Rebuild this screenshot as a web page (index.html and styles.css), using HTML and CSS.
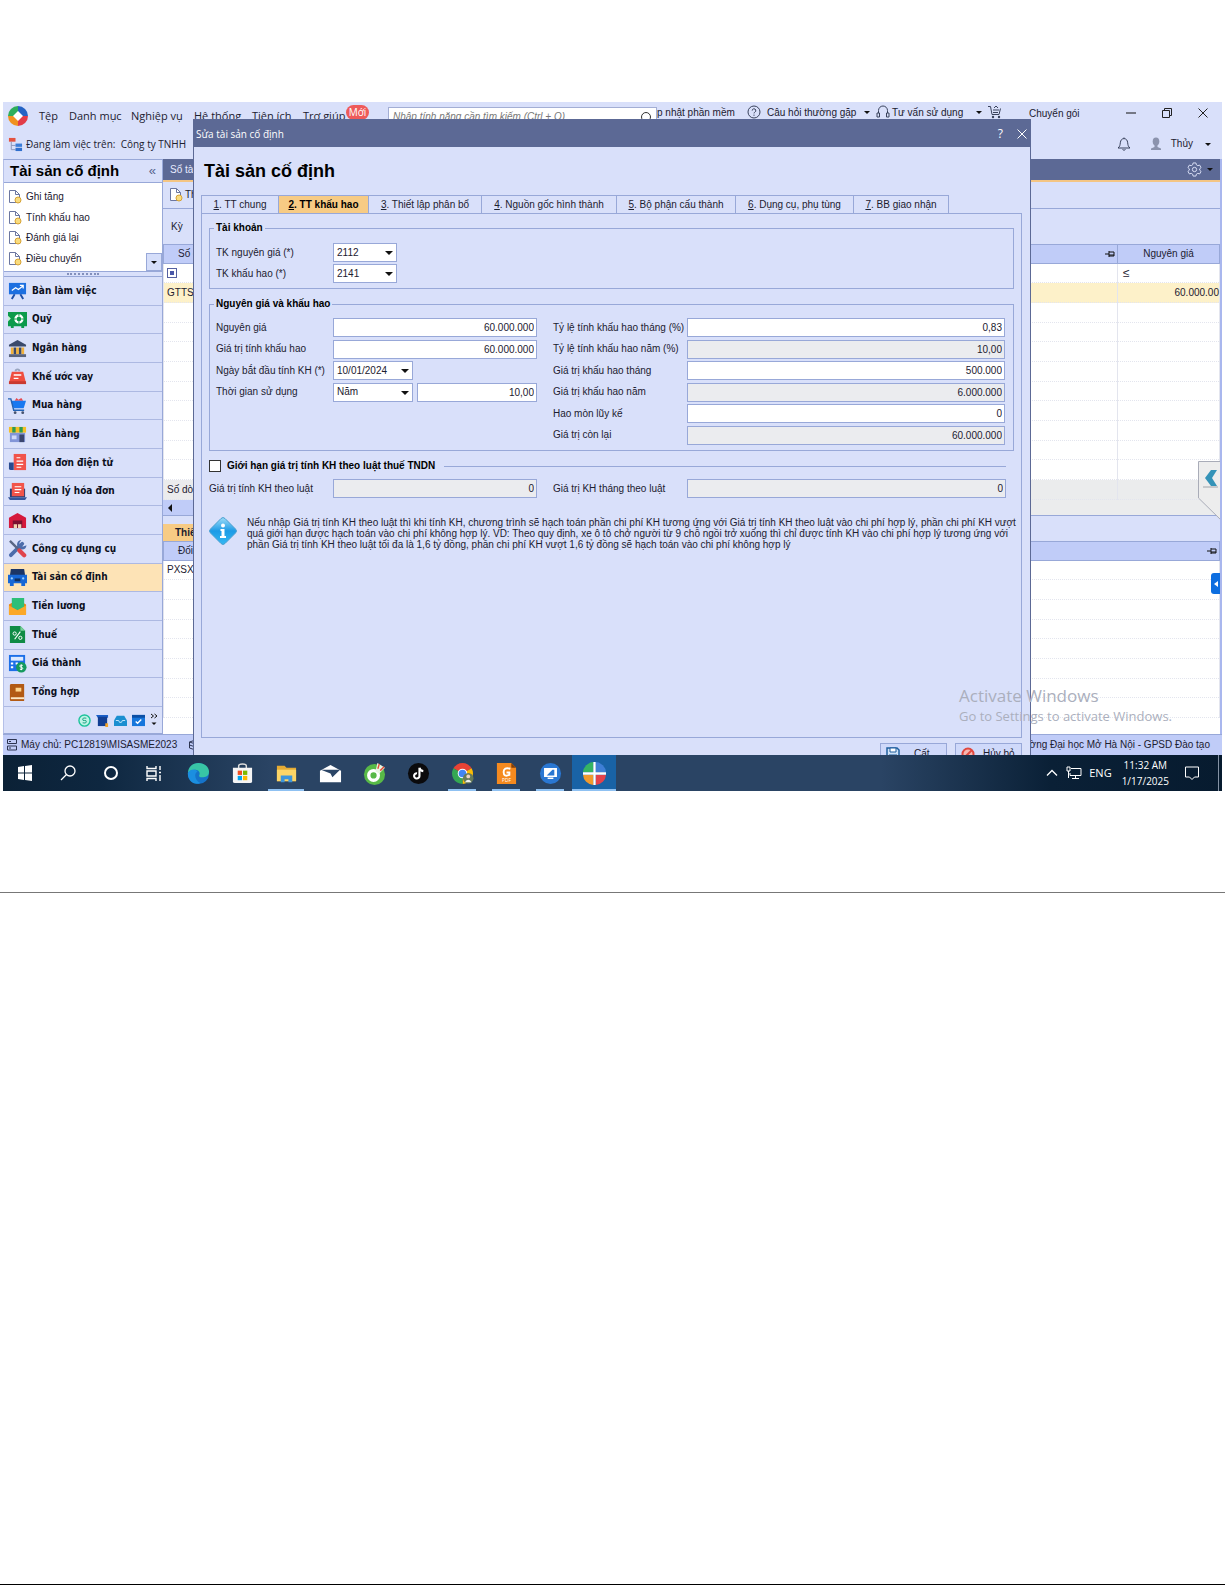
FILE: index.html
```html
<!DOCTYPE html>
<html lang="vi">
<head>
<meta charset="utf-8">
<meta name="viewport" content="width=device-width, initial-scale=1">
<title>Tài sản cố định</title>
<link rel="stylesheet" href="styles.css">
</head>
<body>
<section class="sheet">
<div class="screen">
<div class="desktop">

<header class="menubar">
  <svg class="logo" viewBox="0 0 20 20"><path d="M10 10H0A10 10 0 0 1 10 0z" fill="#2fae5c"/><path d="M10 10V0a10 10 0 0 1 10 10z" fill="#2563c4"/><path d="M10 10v10A10 10 0 0 1 0 10z" fill="#f0911f"/><path d="M10 10h10a10 10 0 0 1-10 10z" fill="#e23c48"/><path d="M10 5l5 5-5 5-5-5z" fill="#fff"/></svg>
  <nav class="menu">
    <a href="#">Tệp</a><a href="#">Danh mục</a><a href="#">Nghiệp vụ</a><a href="#">Hệ thống</a><a href="#">Tiện ích</a><a href="#">Trợ giúp</a>
  </nav>
  <span class="badge">Mới</span>
  <label class="search"><input type="text" aria-label="Tìm kiếm" placeholder="Nhập tính năng cần tìm kiếm (Ctrl + Q)">
    <svg viewBox="0 0 12 12"><circle cx="6" cy="6" r="4.500" fill="none" stroke="#333"/></svg></label>
  <div class="links">
    <a href="#">p nhật phần mềm</a>
    <svg class="i14" viewBox="0 0 14 14"><circle cx="7" cy="7" r="6" fill="none" stroke="#39425c"/><path d="M5.200 5.600a1.800 1.800 0 1 1 2.600 1.600c-.6.3-.8.600-.8 1.200M7 9.600v1.200" fill="none" stroke="#39425c"/></svg>
    <a href="#">Câu hỏi thường gặp</a><i class="caret"></i>
    <svg class="i14" viewBox="0 0 14 14"><path d="M2.500 8V5.500a4.500 4.500 0 0 1 9 0V8M1 8h2.500v4H1zM10.500 8H13v4h-2.500z" fill="none" stroke="#39425c"/></svg>
    <a href="#">Tư vấn sử dụng</a><i class="caret"></i>
    <svg class="i14" viewBox="0 0 14 14"><path d="M0 1.500h2.500l1.500 8h7l1.500-6M5 5h6M5 7.500h5M6 3l2-2 2 2" fill="none" stroke="#39425c"/><circle cx="5" cy="12" r="1.200" fill="#39425c"/><circle cx="11" cy="12" r="1.200" fill="#39425c"/></svg>
    <a href="#" class="plan">Chuyển gói</a>
  </div>
  <div class="winctl">
    <button aria-label="Thu nhỏ"><svg viewBox="0 0 10 10"><path d="M0 5h10" stroke="#111"/></svg></button>
    <button aria-label="Khôi phục"><svg viewBox="0 0 10 10"><path d="M.5 2.500h7v7h-7zM2.500 2.500v-2h7v7h-2" fill="none" stroke="#222"/></svg></button>
    <button aria-label="Đóng"><svg viewBox="0 0 10 10"><path d="M.5.5l9 9M9.500.5l-9 9" stroke="#222"/></svg></button>
  </div>
</header>

<div class="company">
  <svg viewBox="0 0 16 16"><path d="M1 1h7v4H1z" fill="#e4523f"/><path d="M3.500 5v8.500H8M3.500 9H8" fill="none" stroke="#8a94b8"/><path d="M8 7h7v3.500H8z" fill="#3b7dd8"/><path d="M8 11.500h7V15H8z" fill="#2f6fcd"/></svg>
  <span>Đang làm việc trên:&nbsp; Công ty TNHH</span>
  <div class="account">
    <svg class="bell" viewBox="0 0 14 16"><path d="M7 1.500v1M1 12c2-1.500 2-3 2.300-5.200C3.600 4 5 2.600 7 2.600S10.400 4 10.700 6.800C11 9 11 10.500 13 12zM5.500 13.500q1.500 1.500 3 0" fill="none" stroke="#39425c"/></svg>
    <svg class="user" viewBox="0 0 10 14"><ellipse cx="5" cy="4.500" rx="3.300" ry="4" fill="#8b93ad"/><path d="M3.500 8h3v2L10 11.500V13H0v-1.500L3.500 10z" fill="#8b93ad"/></svg>
    <span>Thủy</span><i class="caret"></i>
  </div>
</div>

<div class="main">
<aside class="sidebar">
  <div class="side-head"><h2>Tài sản cố định</h2><span>«</span></div>
  <div class="tasks">
    <a href="#"><svg viewBox="0 0 14 14"><use href="#doc"/></svg>Ghi tăng</a>
    <a href="#"><svg viewBox="0 0 14 14"><use href="#doc"/></svg>Tính khấu hao</a>
    <a href="#"><svg viewBox="0 0 14 14"><use href="#doc"/></svg>Đánh giá lại</a>
    <a href="#"><svg viewBox="0 0 14 14"><use href="#doc"/></svg>Điều chuyển</a>
    <button class="more" aria-label="Cuộn xuống"><i class="caret"></i></button>
  </div>
  <div class="splitter"><i></i></div>
  <nav class="modules">
    <a href="#"><svg viewBox="0 0 20 20"><path d="M1 2h18v12H1z" fill="#1d6fe0"/><path d="M7 14l-3 5M13 14l3 5" stroke="#1d4fa8" stroke-width="2"/><path d="M4 10l4-3 3 2 5-4M12.500 4.500H16V8" fill="none" stroke="#fff" stroke-width="1.300"/></svg>Bàn làm việc</a>
    <a href="#"><svg viewBox="0 0 20 20"><path d="M0 2h20v15H0zM3 17h3v2H3zM14 17h3v2h-3z" fill="#0c9a4b"/><circle cx="11.500" cy="9.500" r="3.700" fill="none" stroke="#fff" stroke-width="2.400"/><path d="M11.500 4v3M11.500 12v3M6 9.500h3M14 9.500h3" stroke="#0c9a4b"/><path d="M0 6l3 3-3 3z" fill="#c8f0d4"/></svg>Quỹ</a>
    <a href="#"><svg viewBox="0 0 20 20"><path d="M10 1l9 5v2H1V6z" fill="#3b4a6b"/><path d="M3 9h3v7H3zM8.500 9h3v7h-3zM14 9h3v7h-3z" fill="#f2b23a"/><path d="M6 9h2.500v7H6zM11.500 9H14v7h-2.500z" fill="#3b4a6b"/><path d="M1 16h18v3H1z" fill="#59637c"/></svg>Ngân hàng</a>
    <a href="#"><svg viewBox="0 0 20 20"><path d="M8 4.500a2 2 0 0 1 4 0" fill="none" stroke="#9aa6c0" stroke-width="2"/><path d="M4 5h12l3 12H1z" fill="#ef4e40"/><path d="M1 15h18v3H1z" fill="#c93a30"/><path d="M6 8.500h8M6 12h5" stroke="#fff" stroke-width="1.500"/></svg>Khế ước vay</a>
    <a href="#"><svg viewBox="0 0 20 20"><path d="M7 5l2-3 2 2 3-2 2 3z" fill="#e5484f"/><path d="M3 5h16l-2.500 8H6z" fill="#1878f0"/><path d="M0 3h3l3 12h11" fill="none" stroke="#2363b5" stroke-width="1.500"/><circle cx="7.500" cy="17.500" r="1.500" fill="#48536e"/><circle cx="15.500" cy="17.500" r="1.500" fill="#48536e"/></svg>Mua hàng</a>
    <a href="#"><svg viewBox="0 0 20 20"><path d="M2 8h16v10H2z" fill="#8295d8"/><path d="M12 10h5v8h-5z" fill="#3a4670"/><path d="M4 11h5v4H4z" fill="#cfd8fa"/><path d="M1 2h18v6H1z" fill="#f5bf25"/><path d="M4.500 2h3.500v6H4.500zM12 2h3.500v6H12z" fill="#2b9a55"/></svg>Bán hàng</a>
    <a href="#"><svg viewBox="0 0 20 20"><path d="M6 1h13v17H6z" fill="#f1544b"/><path d="M1 10h5v8H3q-2 0-2-2z" fill="#284a8f"/><path d="M9 5h4M9 8.500h7M9 12h7M9 15h5" stroke="#fff" stroke-width="1.200"/></svg>Hóa đơn điện tử</a>
    <a href="#"><svg viewBox="0 0 20 20"><path d="M2 7h16v9H2z" fill="#273f77"/><path d="M4 1h13v14H4z" fill="#f1544b"/><path d="M7 5h7M7 8h7M7 11h5" stroke="#fff" stroke-width="1.200"/><path d="M0 16h20l-2 3H2z" fill="#35559b"/></svg>Quản lý hóa đơn</a>
    <a href="#"><svg viewBox="0 0 20 20"><path d="M10 2l9 5v11H1V7z" fill="#d5193c"/><path d="M5 10h10v8H5z" fill="#7b1030"/><path d="M6 14h3.500v4H6zM10.500 14H14v4h-3.500z" fill="#f2d3b0"/></svg>Kho</a>
    <a href="#"><svg viewBox="0 0 20 20"><path d="M3 17L15 5" stroke="#4c6cab" stroke-width="4" stroke-linecap="round"/><path d="M14 1a5 5 0 1 0 5.500 5.500L16 8l-3.500-1L12 4z" fill="#4c6cab"/><path d="M2 2l9 9" stroke="#5a6684" stroke-width="2.500"/><path d="M12 12l5 5" stroke="#e0444c" stroke-width="4.500" stroke-linecap="round"/></svg>Công cụ dụng cụ</a>
    <a href="#" class="on"><svg viewBox="0 0 20 20"><path d="M3 1h14l1 7H2z" fill="#1c3566"/><path d="M0 7h20v9H0zM2 16h4v3H2zM14 16h4v3h-4z" fill="#1767d6"/><circle cx="4" cy="11" r="1.200" fill="#9cd1ff"/><circle cx="16" cy="11" r="1.200" fill="#9cd1ff"/><path d="M7 11h6v3H7z" fill="#12315f"/></svg>Tài sản cố định</a>
    <a href="#"><svg viewBox="0 0 20 20"><path d="M1 8l9-5 9 5v10H1z" fill="#e98613"/><path d="M4 1h13v10l-7 3-6-3z" fill="#2dbf79"/><path d="M1 9l9 5 9-5v10H1z" fill="#fba828"/></svg>Tiền lương</a>
    <a href="#"><svg viewBox="0 0 20 20"><path d="M2 1h11l5 5v13H2z" fill="#0f8b45"/><path d="M13 1l5 5h-5z" fill="#77cf99"/><path d="M7 15l6-8" stroke="#fff" stroke-width="1.200"/><circle cx="7" cy="9" r="1.700" fill="none" stroke="#fff"/><circle cx="13" cy="13.500" r="1.700" fill="none" stroke="#fff"/></svg>Thuế</a>
    <a href="#"><svg viewBox="0 0 20 20"><path d="M1 1h17v17H1z" fill="#1c6fe8"/><path d="M3 3h13v4H3z" fill="#dce9ff"/><path d="M3 10h2.500M8 10h2.500M3 14h2.500" stroke="#fff" stroke-width="2"/><circle cx="14" cy="14" r="5.500" fill="#159a5d"/><path d="M15.500 12q-3-1-3 .5t1.500 1.500 1.500 1.500-3 .5M14 11v6" fill="none" stroke="#fff"/></svg>Giá thành</a>
    <a href="#"><svg viewBox="0 0 20 20"><path d="M3 1h14v18H3q-1 0-1-2V3q0-2 1-2z" fill="#b25a14"/><path d="M3 15h14v2H3z" fill="#fbe7c5"/><path d="M8 5h6v4H8z" fill="#ffd58a"/></svg>Tổng hợp</a>
  </nav>
  <div class="shortcuts">
    <svg viewBox="0 0 14 14"><circle cx="7" cy="7" r="6" fill="#bff3e6" stroke="#1cc39a" stroke-width="1.500"/><path d="M9 4.500q-4-1-4 1T7 7t2 1.500-4 1" fill="none" stroke="#129c7b"/></svg>
    <svg viewBox="0 0 14 14"><path d="M0 1h13v3H2z" fill="#1b5fc8"/><path d="M2 3h10v10H2z" fill="#123f93"/><path d="M10 10h3v4h-3z" fill="#f5a52a"/></svg>
    <svg viewBox="0 0 14 14"><path d="M3 2h8l3 5v6H0V7z" fill="#1b8fd0"/><path d="M2 7h3l1 2h2l1-2h3" fill="none" stroke="#c7ecff"/></svg>
    <svg viewBox="0 0 14 14"><path d="M0 1h14v12H0z" fill="#1676dc"/><path d="M0 1h14v3H0z" fill="#0b4fa5"/><path d="M4 8l2 2 4-4" fill="none" stroke="#fff" stroke-width="1.500"/></svg>
    <svg class="chev" viewBox="0 0 8 14"><path d="M1 1l2.500 2L1 5M4.500 1L7 3 4.500 5" fill="none" stroke="#111"/><path d="M1.500 9.500h5L4 12z" fill="#111"/></svg>
  </div>
</aside>

<section class="work">
  <div class="tabbar"><span>Sổ tài sản</span>
    <div class="gear"><svg viewBox="0 0 16 16"><path d="M6.500 1h3l.5 2 1.500.9 2-.6L15 6l-1.500 1.300v1.400L15 10l-1.500 2.700-2-.6-1.500.9-.5 2h-3L6 13l-1.500-.9-2 .6L1 10l1.500-1.300V7.300L1 6l1.500-2.700 2 .6L6 3z" fill="none" stroke="#dfe4fa"/><circle cx="8" cy="8" r="2.300" fill="none" stroke="#dfe4fa"/></svg><i class="caret"></i></div>
  </div>
  <div class="toolbar"><svg viewBox="0 0 14 14"><use href="#doc"/></svg><span>Thêm</span></div>
  <div class="period">Kỳ</div>
  <table class="grid">
    <colgroup><col><col class="c-val"></colgroup>
    <thead><tr><th class="first"><div><span>Số chứng từ</span><svg class="pin" viewBox="0 0 10 8"><path d="M0 4h4M4 1v6M4 2h5v4H4M4 5h5" fill="none" stroke="#111"/></svg></div></th><th>Nguyên giá</th></tr></thead>
    <tbody>
      <tr class="filter"><td><i class="sq"></i></td><td>≤</td></tr>
      <tr class="sel"><td>GTTS01</td><td class="num">60.000.00</td></tr>
      <tr><td></td><td></td></tr><tr><td></td><td></td></tr><tr><td></td><td></td></tr>
      <tr><td></td><td></td></tr><tr><td></td><td></td></tr><tr><td></td><td></td></tr>
      <tr><td></td><td></td></tr><tr><td></td><td></td></tr><tr><td></td><td></td></tr>
    </tbody>
    <tfoot><tr><td>Số dòng</td><td></td></tr></tfoot>
  </table>
  <div class="hscroll"><div class="thumb"><i></i></div></div>
  <div class="subtabs"><button>Thiết lập</button></div>
  <table class="grid detail">
    <thead><tr><th class="first"><div><span>Đối tượng</span><svg class="pin" viewBox="0 0 10 8"><path d="M0 4h4M4 1v6M4 2h5v4H4M4 5h5" fill="none" stroke="#111"/></svg></div></th></tr></thead>
    <tbody><tr><td>PXSX</td></tr><tr><td></td></tr><tr><td></td></tr><tr><td></td></tr><tr><td></td></tr><tr><td></td></tr><tr><td></td></tr><tr><td></td></tr></tbody>
  </table>
  <div class="rest"></div>
  <svg class="flap" viewBox="0 0 24 60"><path d="M24 .5H.5V37L24 60z" fill="#ededed" stroke="#a9acb8"/><path d="M13 9h6l-5 8 5 8h-6L7 17z" fill="#3493b8"/><path d="M5 26h15" stroke="#a0a4aa"/></svg>
  <div class="handle"><i></i></div>
</section>
</div>

<footer class="status">
  <svg viewBox="0 0 10 12"><path d="M.5.5h9v4h-9zM.5 7h9v4h-9zM2 2.500h2M2 9h2" fill="none" stroke="#2d3552"/></svg>
  <span>Máy chủ: PC12819\MISASME2023</span>
  <svg class="db" viewBox="0 0 10 12"><path d="M.5 3q4.500-3 9 0v6q-4.500 3-9 0zM.5 3q4.500 3 9 0M.5 6q4.500 3 9 0" fill="none" stroke="#2d3552"/></svg>
  <span class="org">Trường Đại học Mở Hà Nội - GPSD Đào tạo</span>
</footer>

<div class="dialog" role="dialog" aria-labelledby="dlg">
  <div class="titlebar"><span>Sửa tài sản cố định</span>
    <button aria-label="Trợ giúp">?</button>
    <button aria-label="Đóng"><svg viewBox="0 0 10 10"><path d="M.5.5l9 9M9.500.5l-9 9" stroke="#fff"/></svg></button></div>
  <form class="content">
    <h1 id="dlg">Tài sản cố định</h1>
    <div class="tabs">
      <button type="button"><span><u>1</u>. TT chung</span></button><button type="button" class="on"><span><u>2</u>. TT khấu hao</span></button><button type="button"><span><u>3</u>. Thiết lập phân bổ</span></button><button type="button"><span><u>4</u>. Nguồn gốc hình thành</span></button><button type="button"><span><u>5</u>. Bộ phận cấu thành</span></button><button type="button"><span><u>6</u>. Dụng cụ, phụ tùng</span></button><button type="button"><span><u>7</u>. BB giao nhận</span></button>
    </div>
    <div class="panel">
      <fieldset class="box accounts"><legend>Tài khoản</legend>
        <div class="col">
          <div class="row"><label for="a1">TK nguyên giá (*)</label><span class="pick small"><select id="a1"><option>2112</option></select></span></div>
          <div class="row"><label for="a2">TK khấu hao (*)</label><span class="pick small"><select id="a2"><option>2141</option></select></span></div>
        </div>
      </fieldset>
      <fieldset class="box cost"><legend>Nguyên giá và khấu hao</legend>
        <div class="cols">
          <div class="col left">
            <div class="row"><label for="b1">Nguyên giá</label><input id="b1" type="text" value="60.000.000"></div>
            <div class="row"><label for="b2">Giá trị tính khấu hao</label><input id="b2" type="text" value="60.000.000"></div>
            <div class="row"><label for="b3">Ngày bắt đầu tính KH (*)</label><span class="pick"><select id="b3"><option>10/01/2024</option></select></span></div>
            <div class="row"><label for="b4">Thời gian sử dụng</label><span class="pick"><select id="b4"><option>Năm</option></select></span><input type="text" aria-label="Số năm" value="10,00"></div>
          </div>
          <div class="col right">
            <div class="row"><label for="c1">Tỷ lệ tính khấu hao tháng (%)</label><input id="c1" type="text" value="0,83"></div>
            <div class="row"><label for="c2">Tỷ lệ tính khấu hao năm (%)</label><input id="c2" type="text" value="10,00" readonly></div>
            <div class="row"><label for="c3">Giá trị khấu hao tháng</label><input id="c3" type="text" value="500.000"></div>
            <div class="row"><label for="c4">Giá trị khấu hao năm</label><input id="c4" type="text" value="6.000.000" readonly></div>
            <div class="row"><label for="c5">Hao mòn lũy kế</label><input id="c5" type="text" value="0"></div>
            <div class="row"><label for="c6">Giá trị còn lại</label><input id="c6" type="text" value="60.000.000" readonly></div>
          </div>
        </div>
      </fieldset>
      <div class="limit"><input type="checkbox" id="lim"><label for="lim">Giới hạn giá trị tính KH theo luật thuế TNDN</label><i></i></div>
      <div class="cols law">
        <div class="col left"><div class="row"><label for="d1">Giá trị tính KH theo luật</label><input id="d1" type="text" value="0" readonly></div></div>
        <div class="col right"><div class="row"><label for="d2">Giá trị KH tháng theo luật</label><input id="d2" type="text" value="0" readonly></div></div>
      </div>
      <div class="note">
        <svg viewBox="0 0 28 28"><defs><linearGradient id="g" x1="0" y1="0" x2="0" y2="1"><stop offset="0" stop-color="#9ddcf8"/><stop offset=".5" stop-color="#1d9be6"/><stop offset="1" stop-color="#35b8f2"/></linearGradient></defs><path d="M12 1.500q2-2 4 0L26.500 12q2 2 0 4L16 26.500q-2 2-4 0L1.500 16q-2-2 0-4z" fill="url(#g)" stroke="#4a9fd0"/><circle cx="14" cy="8.500" r="2" fill="#fff"/><path d="M11.500 12h4v7h1.500v2h-6v-2h1.500v-5h-1z" fill="#fff"/></svg>
        <p>Nếu nhập Giá trị tính KH theo luật thì khi tính KH, chương trình sẽ hạch toán phần chi phí KH tương ứng với Giá trị tính KH theo luật vào chi phí hợp lý, phần chi phí KH vượt<br>quá giới hạn được hạch toán vào chi phí không hợp lý. VD: Theo quy định, xe ô tô chở người từ 9 chỗ ngồi trở xuống thì chỉ được tính KH vào chi phí hợp lý tương ứng với<br>phần Giá trị tính KH theo luật tối đa là 1,6 tỷ đồng, phần chi phí KH vượt 1,6 tỷ đồng sẽ hạch toán vào chi phí không hợp lý</p>
      </div>
    </div>
    <div class="actions">
      <button type="button"><svg viewBox="0 0 14 14"><path d="M1 1h10l2 2v10H1z" fill="#cfe2f7" stroke="#1f5f9e" stroke-width="1.500"/><path d="M4 1h6v4H4zM3 8h8v5H3z" fill="#fff" stroke="#1f5f9e"/></svg><span>Cất</span></button>
      <button type="button"><svg viewBox="0 0 14 14"><circle cx="7" cy="7" r="5.500" fill="#f7b7b0" stroke="#e0483f" stroke-width="2"/><path d="M3 11l8-8" stroke="#e0483f" stroke-width="2"/></svg><span>Hủy bỏ</span></button>
    </div>
  </form>
</div>

<div class="watermark"><b>Activate Windows</b><span>Go to Settings to activate Windows.</span></div>
</div>

<div class="taskbar">
  <div class="sys">
    <button aria-label="Start"><svg viewBox="0 0 20 20"><path d="M3 4l6-1v6.500H3zM10 3l7-1v7.500h-7zM3 10.500h6V17l-6-1zM10 10.500h7V18l-7-1z" fill="#fff"/></svg></button>
    <button aria-label="Search"><svg viewBox="0 0 20 20"><circle cx="12" cy="8" r="5" fill="none" stroke="#fff" stroke-width="1.300"/><path d="M8.500 11.500L3 17" stroke="#fff" stroke-width="1.300"/></svg></button>
    <button aria-label="Cortana"><svg viewBox="0 0 20 20"><circle cx="10" cy="10" r="6" fill="none" stroke="#fff" stroke-width="2"/></svg></button>
    <button aria-label="Task view"><svg viewBox="0 0 20 20"><path d="M3 3v2.500h9V3M3 8h9v5H3zM3 18v-2.500h9V18M16 3v4M16 12v6M15 9.500h2" fill="none" stroke="#fff" stroke-width="1.400"/></svg></button>
  </div>
  <div class="apps">
    <button aria-label="Edge"><svg viewBox="0 0 24 24"><circle cx="12" cy="12" r="11" fill="#1573c9"/><path d="M1 12C1 5 6 1 12 1s11 4 11 9-4 6-7 6-4-1-3-3-1-5-4-5-7 1-8 4z" fill="#38c5a5"/><path d="M1 11c3-4 8-4 10-1-4 2-3 9 3 12C6 25 0 18 1 11z" fill="#1b8fe0"/></svg></button>
    <button aria-label="Store"><svg viewBox="0 0 24 24"><path d="M8 7V4q0-2 4-2t4 2v3" fill="none" stroke="#ddd" stroke-width="1.500"/><path d="M2 6h20v14q0 2-2 2H4q-2 0-2-2z" fill="#f5f5f5"/><path d="M7 9h4.500v4.500H7z" fill="#f25022"/><path d="M12.500 9H17v4.500h-4.500z" fill="#7fba00"/><path d="M7 14.500h4.500V19H7z" fill="#00a4ef"/><path d="M12.500 14.500H17V19h-4.500z" fill="#ffb900"/></svg></button>
    <button aria-label="File Explorer" class="open wide"><svg viewBox="0 0 24 24"><path d="M2 4h8l2 2h10v14H2z" fill="#e5ab34"/><path d="M2 8h20v12H2z" fill="#fcd566"/><path d="M6 14h12v7h-4v-3h-4v3H6z" fill="#3c95db"/></svg></button>
    <button aria-label="Mail"><svg viewBox="0 0 24 24"><path d="M1 9l11-6 11 6v12H1z" fill="#fff"/><path d="M2 8h20l-8 8-2-4z" fill="#2b4566"/></svg></button>
    <button aria-label="Cốc Cốc"><svg viewBox="0 0 24 24"><circle cx="12" cy="13" r="11" fill="#58b947"/><circle cx="11" cy="14" r="5" fill="none" stroke="#fff" stroke-width="3.500"/><path d="M13 10l2-9 8 5-6 6z" fill="#e8f6e0"/><path d="M15.500 7l1.500-5M18 9l4-4" stroke="#e24c3a" stroke-width="1.500"/></svg></button>
    <button aria-label="TikTok"><svg viewBox="0 0 24 24"><circle cx="12" cy="12" r="11" fill="#0a0a0c"/><path d="M13 6v8.500a2.800 2.800 0 1 1-2.500-2.800M13 6q.5 3 4 3.500" fill="none" stroke="#fff" stroke-width="2.200"/></svg></button>
    <button aria-label="Chrome" class="open"><svg viewBox="0 0 24 24"><path d="M12 12L2.500 6.500a11 11 0 0 1 19 0z" fill="#e94335"/><path d="M12 12l9.500-5.500A11 11 0 0 1 12 23z" fill="#fbbc05"/><path d="M12 12v11A11 11 0 0 1 2.500 6.500z" fill="#34a853"/><circle cx="12" cy="12" r="5" fill="#fff"/><circle cx="12" cy="12" r="4" fill="#4285f4"/><circle cx="18" cy="17" r="5.500" fill="#667b58"/><circle cx="18" cy="15" r="2" fill="#ecd3c0"/><path d="M14.500 21q3.500-5 7 0z" fill="#f0f0f0"/></svg></button>
    <button aria-label="PDF" class="open"><svg viewBox="0 0 24 24"><path d="M2 1h15l5 5v17H2z" fill="#f58a1f"/><path d="M17 1l5 5h-5z" fill="#803f0a"/><path d="M16 7q-7-2-7 3.500t6 3V11h-3" fill="none" stroke="#fff" stroke-width="2"/><text x="12" y="21" font-size="5" text-anchor="middle" fill="#fff">PDF</text></svg></button>
    <button aria-label="UltraViewer" class="open"><svg viewBox="0 0 24 24"><circle cx="12" cy="12" r="11" fill="#2a77d2"/><path d="M6 7h12v8H6zM9 17h6" fill="#fff" stroke="#fff" stroke-width="1.500"/><path d="M8 14l6-6h2v6z" fill="#2a77d2"/></svg></button>
    <button aria-label="MISA" class="open current"><svg viewBox="0 0 20 20"><path d="M9 9H0A9.500 9.500 0 0 1 9 0z" fill="#35b463"/><path d="M11 9V0a9.500 9.500 0 0 1 9 9z" fill="#3f7fd6"/><path d="M9 11v9a9.500 9.500 0 0 1-9-9z" fill="#f09a2d"/><path d="M11 11h9a9.500 9.500 0 0 1-9 9z" fill="#e4424b"/><path d="M9 0h2v9h9v2h-9v9H9v-9H0V9h9z" fill="#fff"/></svg></button>
  </div>
  <div class="tray">
    <svg class="up" viewBox="0 0 12 12"><path d="M1 8.500l5-5 5 5" fill="none" stroke="#fff" stroke-width="1.300"/></svg>
    <svg class="net" viewBox="0 0 16 14"><path d="M5 2.500h10v7H4V7M9.500 9.500V12M6 12.500h7M1 1h3v4H1zM2.500 5v7" fill="none" stroke="#fff"/></svg>
    <span>ENG</span>
    <time>11:32 AM<br>1/17/2025</time>
    <svg class="msg" viewBox="0 0 14 14"><path d="M.5 1h13v10H9.500L7 13.500 4.500 11h-4z" fill="none" stroke="#fff"/></svg>
  </div>
</div>
</div>
</section>
<hr class="rule">
<section class="sheet blank"></section>

<svg class="defs" width="0" height="0"><symbol id="doc" viewBox="0 0 14 14"><path d="M1.500.5h6l4 4v8h-10z" fill="#fff" stroke="#6b76a0"/><path d="M7.500.5v4h4" fill="none" stroke="#6b76a0"/><circle cx="10" cy="10" r="3" fill="#f9dc7e" stroke="#d6a235"/></symbol></svg>
</body>
</html>
```
FILE: styles.css
```css
:root {
  --bg: #d9e0fa;
  --bar: #5c6995;
  --head: #c0ccf8;
  --line: #98a8d8;
  --ui: "Open Sans", "Noto Sans", sans-serif;
  --form: "Liberation Sans", Arial, sans-serif;
}
* { box-sizing: border-box; }
body { margin: 0; background: #fff; font: 10px/12px var(--form); color: #1c2030; }
a { color: inherit; text-decoration: none; }
button { border: 0; padding: 0; background: none; font: inherit; color: inherit; }
svg { display: block; flex: none; }
.defs { position: absolute; }
.sheet { padding: 102px 3px 101px; }
.blank { padding: 0; min-height: 692px; border-bottom: 1px solid #000; }
.rule { margin: 0; border: 0; height: 1px; background: #777; }

.desktop { position: relative; display: flex; flex-direction: column; min-height: 653px; overflow: hidden; background: var(--bg); }
.caret { flex: none; width: 0; height: 0; border: 3px solid transparent; border-top: 3px solid #111; border-bottom: 0; }

.menubar { display: flex; height: 30px; padding-left: 5px; font: 10px/14px var(--ui); }
.logo { width: 20px; height: 20px; margin: 4px 11px 0 0; }
.menu { display: grid; grid-template-columns: 30px 62px 63px 58px 51px 43px; padding-top: 7px; font-size: 11px; white-space: nowrap; }
.badge { width: 23px; height: 15px; margin-top: 3px; border-radius: 8px; background: #ee5a5a; color: #fff; text-align: center; }
.search { display: flex; align-items: center; justify-content: space-between; width: 269px; height: 20px; margin: 5px 0 0 19px; padding: 0 4px; border: 1px solid #a3aed4; background: #fff; }
.search input { flex: 1; min-width: 0; border: 0; padding: 0; background: none; font: italic 10px/14px var(--form); }
.search input::placeholder { color: #777; }
.search svg { width: 12px; height: 12px; }
.links { display: grid; grid-template-columns: 90px 20px 97px 12px 16px 84px 12px 41px auto; align-items: start; padding-top: 5px; font: 10px/12px var(--form); white-space: nowrap; }
.links .caret { margin-top: 4px; }
.plan { padding-top: 1px; }
.i14 { width: 14px; height: 14px; margin-top: -2px; }
.winctl { display: flex; gap: 26px; margin-left: auto; padding: 5px 14px 0 0; height: 16px; }
.winctl svg { width: 10px; height: 10px; }

.company { display: flex; align-items: center; gap: 3px; height: 27px; padding: 0 11px 3px 5px; font: 10px/14px var(--ui); white-space: nowrap; }
.company > svg { width: 15px; height: 15px; }
.account { display: flex; align-items: center; margin-left: auto; font: 10px/12px var(--form); }
.account span { padding: 0 12px 0 10px; }
.bell { width: 14px; height: 16px; margin-right: 20px; }
.user { width: 10px; height: 14px; }

.main { display: flex; flex: 1; min-height: 0; }
.sidebar { display: flex; flex-direction: column; width: 160px; border: 1px solid var(--line); border-left-color: #b5c0e8; }
.side-head { display: flex; align-items: center; justify-content: space-between; height: 23px; padding: 0 6px; border-bottom: 1px solid var(--line); }
.side-head h2 { margin: 0; font: bold 15px/18px var(--form); color: #000; }
.side-head span { font-size: 13px; color: #55608a; }
.tasks { position: relative; display: grid; grid-auto-rows: 20px; align-content: space-between; height: 88px; padding: 4px 4px 2px; background: #fff; }
.tasks a { display: flex; align-items: center; gap: 4px; }
.tasks svg, .toolbar svg { width: 14px; height: 14px; }
.more { position: absolute; right: 0; bottom: 0; display: grid; place-items: center; width: 16px; height: 18px; border: 1px solid var(--line); background: #d5defa; }
.splitter { display: grid; place-items: center; height: 6px; border-top: 1px solid var(--line); border-bottom: 1px solid var(--line); }
.splitter i { width: 32px; border-top: 2px dotted #8390bb; }
.modules { display: grid; grid-auto-rows: 1fr; flex: 1; font: bold 10px/14px "DejaVu Sans Condensed", "DejaVu Sans", sans-serif; color: #0c0f1c; }
.modules a { display: flex; align-items: center; gap: 5px; padding-left: 4px; border-bottom: 1px solid #adb9e2; white-space: nowrap; }
.modules .on { background: #fde3b6; }
.modules svg { width: 19px; height: 19px; }
.shortcuts { display: flex; align-items: center; justify-content: flex-end; gap: 5px; height: 26px; padding-right: 4px; }
.shortcuts svg { width: 13px; height: 13px; }
.shortcuts .chev { width: 8px; height: 14px; }

.work { position: relative; flex: 1; min-width: 0; display: flex; flex-direction: column; overflow: hidden; border-right: 2px solid #a9b7ee; }
.tabbar { display: flex; align-items: center; justify-content: space-between; height: 23px; padding: 0 7px; border-bottom: 2px solid #f4c583; background: var(--bar); color: #e8ecff; }
.gear { display: flex; align-items: center; gap: 5px; }
.gear svg { width: 15px; height: 15px; }
.toolbar { display: flex; align-items: center; gap: 2px; height: 27px; padding-left: 6px; border-bottom: 1px solid var(--line); }
.period { height: 35px; padding: 12px 8px; }
.grid { width: 100%; table-layout: fixed; border-collapse: collapse; background: #fff; }
.c-val { width: 102px; }
.grid th { height: 19px; padding: 0; background: var(--head); border: 1px solid var(--line); font-weight: normal; }
.first div { display: flex; align-items: center; justify-content: space-between; padding: 0 2px 0 14px; }
.pin { width: 10px; height: 8px; }
.grid td { height: 20px; padding: 0 3px; border: 1px solid #e3e5ee; border-top-style: dotted; border-bottom-style: dotted; }
.grid tbody tr:nth-child(3n+1) td { height: 19px; }
.grid .sel td { background: #fdf1c9; }
.grid tfoot td { background: #ebeced; }
.grid td.num { padding: 0; text-align: right; }
.filter td:last-child { padding-left: 5px; font-size: 12px; }
.sq { display: block; width: 10px; height: 10px; border: 1px solid #5560a0; background: #4a58a8; box-shadow: inset 0 0 0 2px #fff; }
.hscroll { height: 16px; border-bottom: 1px solid var(--line); background: #ebeced; }
.thumb { display: flex; align-items: center; width: 60%; height: 15px; padding-left: 5px; background: var(--head); }
.thumb i { border: 4px solid transparent; border-right-color: #111; border-left: 0; }
.subtabs { padding-top: 8px; }
.subtabs button { height: 18px; width: 90px; padding-left: 12px; background: #f7cb84; font-weight: bold; text-align: left; }
.detail { margin-top: -1px; }
.rest { flex: 1; background: #fff; }
.flap { position: absolute; right: -2px; top: 302px; width: 24px; height: 60px; }
.handle { position: absolute; right: 0; top: 414px; display: flex; align-items: center; width: 9px; height: 21px; padding-left: 3px; border-radius: 3px 0 0 3px; background: #0d6ee0; }
.handle i { border: 3px solid transparent; border-right: 4px solid #fff; border-left: 0; }

.status { display: flex; align-items: center; gap: 4px; height: 21px; padding: 0 12px 0 4px; background: var(--head); border-top: 1px solid var(--line); white-space: nowrap; }
.status svg { width: 10px; height: 12px; }
.status .db { margin-left: 8px; }
.org { margin-left: auto; }

.dialog { position: absolute; left: 190px; right: 191px; top: 17px; border: 1px solid var(--bar); background: var(--bg); }
.titlebar { display: flex; align-items: center; gap: 14px; height: 27px; padding: 0 3px 0 2px; background: var(--bar); color: #fff; font: 10px/14px var(--ui); }
.titlebar span { margin-right: auto; }
.titlebar svg { width: 10px; height: 10px; }
.titlebar button { font-size: 12px; }
.content { padding: 0 8px 0 7px; }
.content h1 { margin: 0; padding: 13px 3px 12px; font: bold 18px/23px var(--form); color: #000; }
.tabs { display: grid; grid-template-columns: 77px 90px 113px 135px 119px 118px 95px; border-left: 1px solid var(--line); }
.tabs button { height: 18px; border: 1px solid var(--line); border-width: 1px 1px 0 0; white-space: nowrap; }
.tabs .on { background: #f7cb84; font-weight: bold; color: #000; }
.panel { height: 525px; padding: 7px 7px 0; border: 1px solid var(--line); }
.box { margin: 0; padding: 8px 8px 5px 6px; border: 1px solid var(--line); }
.box legend { margin-left: -2px; padding: 0 2px; font-weight: bold; line-height: 14px; color: #000; }
.col { display: flex; flex-direction: column; justify-content: space-between; }
.accounts .col { height: 40px; }
.cost .left { height: 84px; }
.cost .right { height: 127px; }
.row { display: flex; align-items: center; gap: 4px; height: 19px; white-space: nowrap; }
.row label { flex: none; width: 113px; }
.row input { flex: 1; min-width: 0; height: 19px; padding: 0 2px; border: 1px solid var(--line); border-radius: 0; background: #fff; font: inherit; color: inherit; text-align: right; }
.row input[readonly] { background: #ebecef; }
.pick { position: relative; width: 80px; }
.pick.small { width: 64px; }
.pick::after { content: ""; position: absolute; right: 4px; top: 8px; border: 4px solid transparent; border-top-color: #111; border-bottom: 0; pointer-events: none; }
.pick select { display: block; width: 100%; height: 19px; padding: 0 3px; appearance: none; border: 1px solid var(--line); border-radius: 0; background: #fff; font: inherit; color: inherit; }
.cost { margin-top: 8px; padding-top: 7px; }
.cols { display: grid; grid-template-columns: 321px 1fr; gap: 16px; }
.col.right label { width: 130px; }
.limit { display: flex; align-items: center; gap: 6px; height: 14px; margin: 8px 8px 0 0; }
.limit input { appearance: none; width: 12px; height: 12px; margin: 0; border: 1px solid #333; background: #fff; }
.limit label { font-weight: bold; color: #000; }
.limit i { flex: 1; margin-left: 3px; border-top: 1px solid var(--line); }
.law { margin: 6px 8px 0 0; grid-template-columns: 328px 1fr; }
.law .left label { width: 120px; }
.law .right label { width: 130px; }
.note { display: flex; gap: 10px; margin-top: 19px; }
.note svg { width: 28px; height: 28px; }
.note p { margin: 0; font-size: 10px; line-height: 11px; white-space: nowrap; }
.actions { display: flex; justify-content: flex-end; gap: 8px; padding: 5px 0; }
.actions button { display: flex; align-items: center; gap: 14px; width: 67px; height: 22px; padding-left: 5px; border: 1px solid var(--line); background: #cfd9fa; white-space: nowrap; }
.actions button + button { gap: 8px; }
.actions svg { width: 14px; height: 14px; }

.watermark { position: absolute; right: 50px; bottom: 30px; display: flex; flex-direction: column; width: 213px; color: #abafbd; font: 13px/18px var(--ui); white-space: nowrap; pointer-events: none; }
.watermark b { font: 17px/22px var(--ui); }

.taskbar { display: flex; height: 36px; background: linear-gradient(90deg, #0b2136 0, #0e2740 8%, #2a4464 22%, #2a4464 72%, #0a2036 86%, #071b2f 100%); color: #fff; font: 11px/16px var(--ui); }
.sys, .apps { display: grid; grid-auto-flow: column; grid-auto-columns: 43px; }
.apps { grid-auto-columns: 44px; margin-left: 1px; }
.taskbar button { display: grid; place-items: center; }
.sys svg { width: 20px; height: 20px; }
.apps svg { width: 23px; height: 23px; }
.open { position: relative; }
.open::after { content: ""; position: absolute; left: 8px; right: 8px; bottom: 0; height: 2px; background: #8fc1f2; }
.open.wide::after { left: 4px; right: 4px; }
.current { background: #1963a6; }
.current::after { left: 0; right: 0; }
.tray { display: flex; align-items: center; margin-left: auto; padding-right: 19px; border-right: 1px solid #8492a4; margin-right: 3px; }
.up { width: 12px; height: 12px; margin-right: 8px; }
.net { width: 16px; height: 14px; margin-right: 7px; }
.tray time { margin: 0 16px 0 10px; text-align: center; font-size: 10px; }
.msg { width: 14px; height: 14px; }
```
